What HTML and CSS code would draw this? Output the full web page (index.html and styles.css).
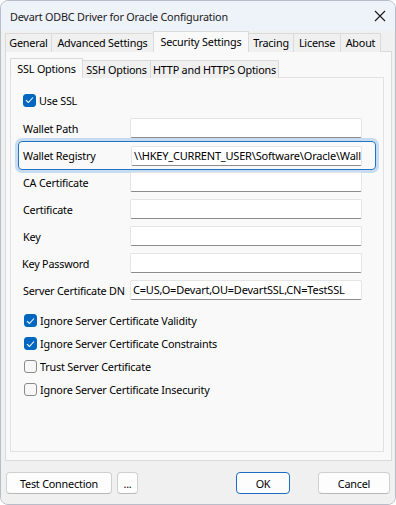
FILE: index.html
```html
<!DOCTYPE html>
<html>
<head>
<meta charset="utf-8">
<link rel="stylesheet" href="styles.css">
</head>
<body>
<div class="window">
  <div class="titlebar">
    <span class="title">Devart ODBC Driver for Oracle Configuration</span>
    <svg class="close" width="12" height="12" viewBox="0 0 12 12"><path d="M1 1 L11 11 M11 1 L1 11" stroke="#1a1a1a" stroke-width="1.1" fill="none"/></svg>
  </div>
  <div class="client">
    <div class="tabs">
      <div class="tab t-general">General</div>
      <div class="tab t-adv">Advanced Settings</div>
      <div class="tab t-sec active">Security Settings</div>
      <div class="tab t-trace">Tracing</div>
      <div class="tab t-lic">License</div>
      <div class="tab t-about">About</div>
    </div>
    <div class="panel">
      <div class="subtabs">
        <div class="subtab s-ssl active">SSL Options</div>
        <div class="subtab s-ssh">SSH Options</div>
        <div class="subtab s-http">HTTP and HTTPS Options</div>
      </div>
      <div class="subpanel">
        <label class="check first"><span class="box on"><svg width="9" height="8" viewBox="0 0 9 8"><path d="M1 4.2 L3.4 6.5 L8 1.5" stroke="#fff" stroke-width="1.1" fill="none"/></svg></span>Use SSL</label>

        <div class="field f-path"><span class="lbl">Wallet Path</span><span class="input"></span></div>
        <div class="field focus"><span class="lbl">Wallet Registry</span><span class="input">\\HKEY_CURRENT_USER\Software\Oracle\Wallet</span></div>
        <div class="field f-ca"><span class="lbl">CA Certificate</span><span class="input"></span></div>
        <div class="field"><span class="lbl">Certificate</span><span class="input"></span></div>
        <div class="field"><span class="lbl">Key</span><span class="input"></span></div>
        <div class="field"><span class="lbl kp">Key Password</span><span class="input"></span></div>
        <div class="field"><span class="lbl">Server Certificate DN</span><span class="input">C=US,O=Devart,OU=DevartSSL,CN=TestSSL</span></div>

        <div class="checks">
          <label class="check"><span class="box on"><svg width="9" height="8" viewBox="0 0 9 8"><path d="M1 4.2 L3.4 6.5 L8 1.5" stroke="#fff" stroke-width="1.1" fill="none"/></svg></span>Ignore Server Certificate Validity</label>
          <label class="check"><span class="box on"><svg width="9" height="8" viewBox="0 0 9 8"><path d="M1 4.2 L3.4 6.5 L8 1.5" stroke="#fff" stroke-width="1.1" fill="none"/></svg></span>Ignore Server Certificate Constraints</label>
          <label class="check"><span class="box"></span>Trust Server Certificate</label>
          <label class="check"><span class="box"></span>Ignore Server Certificate Insecurity</label>
        </div>
      </div>
    </div>
    <div class="footer">
      <button class="btn b-test">Test Connection</button>
      <button class="btn b-more">...</button>
      <span class="spacer"></span>
      <button class="btn b-ok default">OK</button>
      <button class="btn b-cancel">Cancel</button>
    </div>
  </div>
</div>
</body>
</html>
```

FILE: styles.css
```css
* { box-sizing: border-box; }
html, body { margin: 0; padding: 0; background: #ffffff; }
body {
  font-family: "Noto Sans", "Open Sans", sans-serif;
  font-size: 10.8px;
  letter-spacing: -0.2px;
  color: #000;
}
.window {
  width: 396px;
  height: 505px;
  border: 1px solid #b9bdc9;
  border-radius: 8px;
  overflow: hidden;
  background: #f0f0f0;
  display: flex;
  flex-direction: column;
}
.titlebar {
  height: 30px;
  background: #eef2f9;
  display: flex;
  align-items: center;
  padding-left: 9px;
  padding-right: 8px;
}
.title { flex: 1; font-size: 10.8px; color: #1a1a1a; white-space: nowrap; }
.close { margin-right: 1px; }
.client {
  flex: 1;
  background: #f0f0f0;
  padding: 0 3px 0 4px;
  display: flex;
  flex-direction: column;
}
.tabs {
  display: flex;
  height: 21px;
  align-items: flex-end;
  position: relative;
  z-index: 2;
}
.tab {
  height: 19px;
  border: 1px solid #dadada;
  border-bottom: none;
  margin-right: -1px;
  background: #f0f0f0;
  line-height: 18px;
  white-space: nowrap;
  text-align: center;
  color: #000;
}
.tab.active {
  height: 21px;
  background: #f9f9f9;
  line-height: 19px;
}
.t-general { width: 47px; }
.t-adv { width: 103px; }
.t-sec { width: 96px; }
.t-trace { width: 46px; }
.t-lic { width: 48px; }
.t-about { width: 41px; }
.panel {
  height: 410px;
  border: 1px solid #dadada;
  background: #f9f9f9;
  margin-top: -1px;
  padding: 5px 7px 0 4px;
}
.subtabs {
  display: flex;
  height: 21px;
  align-items: flex-end;
  position: relative;
  z-index: 2;
}
.subtab {
  height: 18px;
  border: 1px solid #dadada;
  border-bottom: none;
  margin-right: -1px;
  background: #f0f0f0;
  line-height: 17px;
  white-space: nowrap;
  text-align: center;
}
.subtab.active {
  height: 20px;
  background: #f9f9f9;
  line-height: 19px;
}
.s-ssl { width: 73px; }
.s-ssh { width: 69px; }
.s-http { width: 129px; }
.subpanel {
  height: 375px;
  margin-top: -1px;
  border: 1px solid #e2e2e2;
  background: #f9f9f9;
  padding: 0 0 0 12px;
}
.check {
  display: flex;
  align-items: center;
  height: 23px;
  white-space: nowrap;
}
.check.first { margin-top: 12px; height: 20px; }
.box {
  width: 13px;
  height: 13px;
  border: 1px solid #8a8a8a;
  border-radius: 3px;
  background: #f7f7f7;
  margin-right: 3px;
  display: inline-flex;
  align-items: center;
  justify-content: center;
}
.box.on { background: #0067c0; border-color: #0067c0; }
.field {
  display: flex;
  align-items: center;
  height: 20px;
  margin-top: 7px;
}
.field.f-path { margin-top: 8px; }
.field.f-ca { margin-top: 2px; }
.lbl { width: 107px; white-space: nowrap; }
.lbl.kp { margin-left: -1px; width: 108px; }
.input {
  width: 232px;
  height: 20px;
  background: #ffffff;
  border: 1px solid #e5e5e5;
  border-bottom-color: #8c8c8c;
  border-radius: 2px;
  padding: 0 0 0 2px;
  line-height: 18px;
  font-size: 11px;
  overflow: hidden;
  white-space: nowrap;
}
.field.focus {
  height: 29px;
  margin-top: 3px;
  margin-left: -5px;
  width: 358px;
  padding-left: 4px;
  border: 1px solid #2373c4;
  border-radius: 4px;
  box-shadow: 0 0 0 3px #c6dcf1;
}
.field.focus .lbl { width: 108px; }
.field.focus .input { width: 231px; border-bottom-color: #8c8c8c; }
.checks { margin-top: 9px; }
.checks .check { padding-left: 1px; }
.footer {
  display: flex;
  align-items: center;
  padding: 11px 2px 0 1px;
}
.btn {
  font-family: "Noto Sans", "Open Sans", sans-serif;
  font-size: 10.8px;
  letter-spacing: -0.2px;
  height: 22px;
  background: #fdfdfd;
  border: 1px solid #d0d0d0;
  border-bottom-color: #b8b8b8;
  border-radius: 4px;
  color: #000;
  padding: 0;
}
.b-test { width: 106px; }
.b-more { width: 21px; margin-left: 5px; }
.spacer { flex: 1; }
.b-ok { width: 54px; margin-right: 28px; }
.btn.default { border: 1px solid #1a6dc2; }
.b-cancel { width: 72px; }
```
